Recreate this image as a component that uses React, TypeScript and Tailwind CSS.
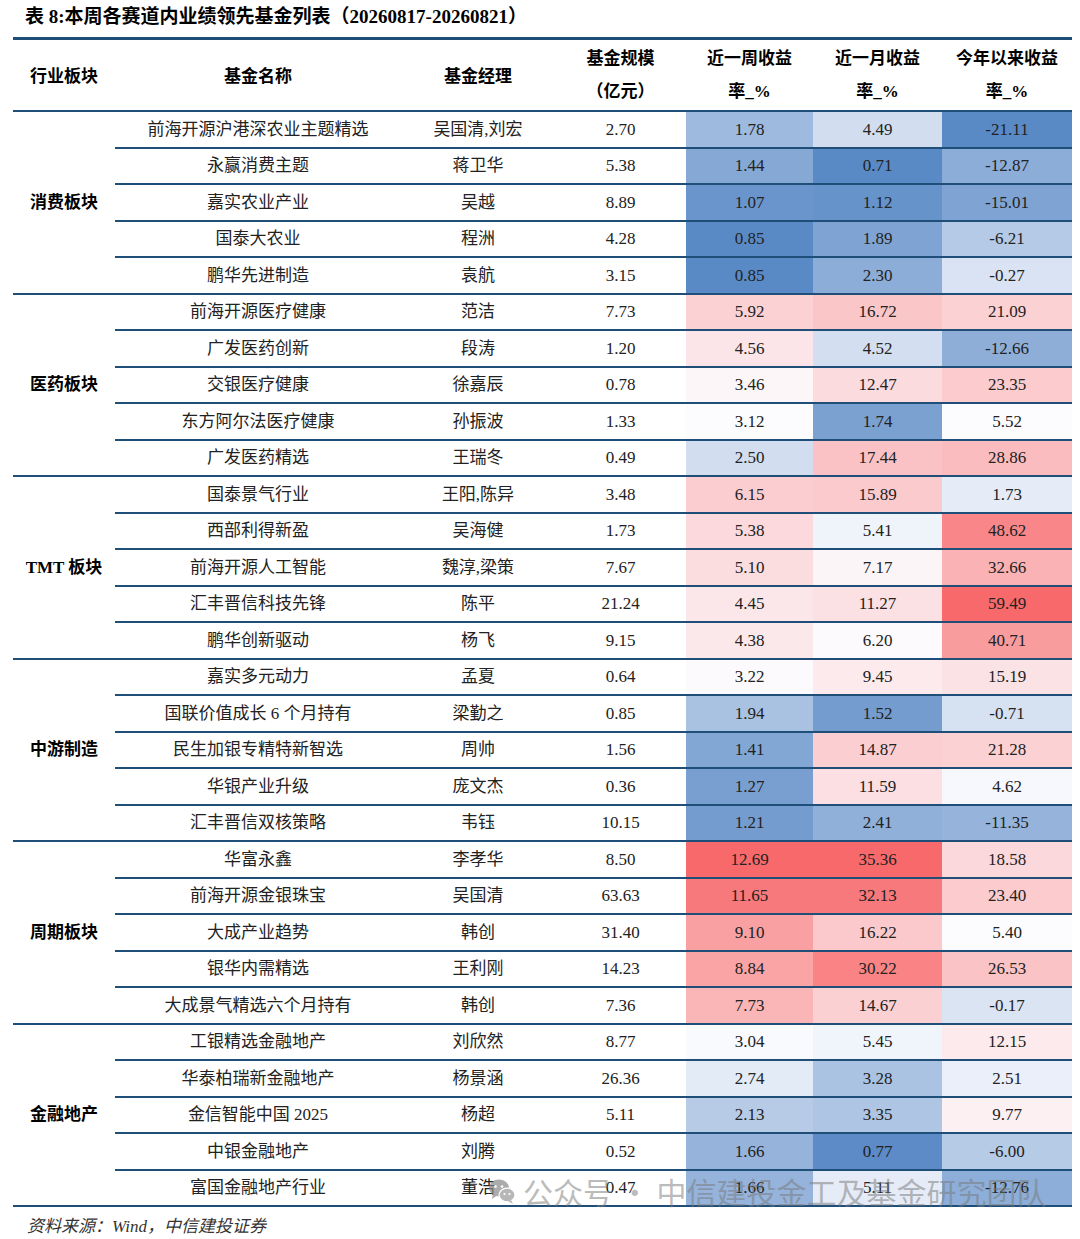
import React from "react";

type Row = [string, string, string, number, number, number];

const GROUPS: { sector: string; rows: Row[] }[] = [
  {
    sector: "消费板块",
    rows: [
      ["前海开源沪港深农业主题精选", "吴国清,刘宏", "2.70", 1.78, 4.49, -21.11],
      ["永赢消费主题", "蒋卫华", "5.38", 1.44, 0.71, -12.87],
      ["嘉实农业产业", "吴越", "8.89", 1.07, 1.12, -15.01],
      ["国泰大农业", "程洲", "4.28", 0.85, 1.89, -6.21],
      ["鹏华先进制造", "袁航", "3.15", 0.85, 2.3, -0.27],
    ],
  },
  {
    sector: "医药板块",
    rows: [
      ["前海开源医疗健康", "范洁", "7.73", 5.92, 16.72, 21.09],
      ["广发医药创新", "段涛", "1.20", 4.56, 4.52, -12.66],
      ["交银医疗健康", "徐嘉辰", "0.78", 3.46, 12.47, 23.35],
      ["东方阿尔法医疗健康", "孙振波", "1.33", 3.12, 1.74, 5.52],
      ["广发医药精选", "王瑞冬", "0.49", 2.5, 17.44, 28.86],
    ],
  },
  {
    sector: "TMT 板块",
    rows: [
      ["国泰景气行业", "王阳,陈异", "3.48", 6.15, 15.89, 1.73],
      ["西部利得新盈", "吴海健", "1.73", 5.38, 5.41, 48.62],
      ["前海开源人工智能", "魏淳,梁策", "7.67", 5.1, 7.17, 32.66],
      ["汇丰晋信科技先锋", "陈平", "21.24", 4.45, 11.27, 59.49],
      ["鹏华创新驱动", "杨飞", "9.15", 4.38, 6.2, 40.71],
    ],
  },
  {
    sector: "中游制造",
    rows: [
      ["嘉实多元动力", "孟夏", "0.64", 3.22, 9.45, 15.19],
      ["国联价值成长 6 个月持有", "梁勤之", "0.85", 1.94, 1.52, -0.71],
      ["民生加银专精特新智选", "周帅", "1.56", 1.41, 14.87, 21.28],
      ["华银产业升级", "庞文杰", "0.36", 1.27, 11.59, 4.62],
      ["汇丰晋信双核策略", "韦钰", "10.15", 1.21, 2.41, -11.35],
    ],
  },
  {
    sector: "周期板块",
    rows: [
      ["华富永鑫", "李孝华", "8.50", 12.69, 35.36, 18.58],
      ["前海开源金银珠宝", "吴国清", "63.63", 11.65, 32.13, 23.4],
      ["大成产业趋势", "韩创", "31.40", 9.1, 16.22, 5.4],
      ["银华内需精选", "王利刚", "14.23", 8.84, 30.22, 26.53],
      ["大成景气精选六个月持有", "韩创", "7.36", 7.73, 14.67, -0.17],
    ],
  },
  {
    sector: "金融地产",
    rows: [
      ["工银精选金融地产", "刘欣然", "8.77", 3.04, 5.45, 12.15],
      ["华泰柏瑞新金融地产", "杨景涵", "26.36", 2.74, 3.28, 2.51],
      ["金信智能中国 2025", "杨超", "5.11", 2.13, 3.35, 9.77],
      ["中银金融地产", "刘腾", "0.52", 1.66, 0.77, -6.0],
      ["富国金融地产行业", "董浩", "0.47", 1.66, 5.11, -12.76],
    ],
  },
];

// Excel 3-color scale: min blue, 50th percentile white, max red
const BLUE = [90, 138, 198];
const WHITE = [252, 252, 255];
const RED = [248, 105, 107];

function colStats(idx: 3 | 4 | 5) {
  const vals = GROUPS.flatMap((g) => g.rows.map((r) => r[idx] as number)).sort((a, b) => a - b);
  const n = vals.length;
  const pos = (n - 1) * 0.5;
  const lo = Math.floor(pos);
  const mid = vals[lo] + (vals[Math.ceil(pos)] - vals[lo]) * (pos - lo);
  return { min: vals[0], mid, max: vals[n - 1] };
}

const STATS = { 3: colStats(3), 4: colStats(4), 5: colStats(5) };

function mix(a: number[], b: number[], t: number) {
  const c = a.map((x, i) => Math.round(x + (b[i] - x) * t));
  return `rgb(${c[0]}, ${c[1]}, ${c[2]})`;
}

function heat(v: number, idx: 3 | 4 | 5) {
  const s = STATS[idx];
  if (v <= s.mid) return mix(BLUE, WHITE, (v - s.min) / (s.mid - s.min));
  return mix(WHITE, RED, (v - s.mid) / (s.max - s.mid));
}

const COLS = "grid grid-cols-[102px_286px_154px_131px_127px_129px_130px]";
const LINE = "border-[#1f4e79]";

export default function App() {
  return (
    <div
      className="relative w-[1080px] h-[1239px] bg-white pl-[13px] text-[#222]"
      style={{ fontFamily: '"Liberation Serif", "Noto Sans CJK SC", serif' }}
    >
      <div className="h-[37px] flex items-center pl-[12px] pb-[3px] text-[19px] font-bold text-black">
        表 8:本周各赛道内业绩领先基金列表（20260817-20260821）
      </div>

      <div className={`w-[1059px] border-t-[3px] ${LINE}`}>
        {/* header */}
        <div className={`${COLS} h-[72px] border-b-2 ${LINE} text-[17px] font-bold text-black`}>
          <div className="flex items-center justify-center pt-[4px]">行业板块</div>
          <div className="flex items-center justify-center pt-[4px]">基金名称</div>
          <div className="flex items-center justify-center pt-[4px]">基金经理</div>
          <HeadCell a="基金规模" b="（亿元）" />
          <HeadCell a="近一周收益" b="率_%" />
          <HeadCell a="近一月收益" b="率_%" />
          <HeadCell a="今年以来收益" b="率_%" />
        </div>

        {/* body */}
        <div className={`${COLS} auto-rows-[36.5px] text-[17px]`}>
          {GROUPS.map((g) => (
            <React.Fragment key={g.sector}>
              <div
                className={`row-span-5 flex items-center justify-center border-b-2 ${LINE} font-bold text-black`}
              >
                {g.sector}
              </div>
              {g.rows.map((r) => (
                <React.Fragment key={r[0]}>
                  <Cell>{r[0]}</Cell>
                  <Cell>{r[1]}</Cell>
                  <Cell>{r[2]}</Cell>
                  <Cell bg={heat(r[3], 3)}>{r[3].toFixed(2)}</Cell>
                  <Cell bg={heat(r[4], 4)}>{r[4].toFixed(2)}</Cell>
                  <Cell bg={heat(r[5], 5)}>{r[5].toFixed(2)}</Cell>
                </React.Fragment>
              ))}
            </React.Fragment>
          ))}
        </div>
      </div>

      <div className="pt-[7px] pl-[14px] text-[17px] italic text-[#333]">资料来源：Wind，中信建投证券</div>

      {/* watermark */}
      <div
        className="absolute left-[488px] top-[1176px] flex items-center gap-[7px] text-[30px] text-[rgba(120,120,120,0.5)] leading-none"
        style={{ fontFamily: '"Noto Sans CJK SC", sans-serif' }}
      >
        <WeChatMark />
        <span>公众号 · 中信建投金工及基金研究团队</span>
      </div>
    </div>
  );
}

function HeadCell({ a, b }: { a: string; b: string }) {
  return (
    <div className="flex flex-col items-center justify-center leading-[33px]">
      <span>{a}</span>
      <span>{b}</span>
    </div>
  );
}

function Cell({ children, bg }: { children: React.ReactNode; bg?: string }) {
  return (
    <div
      className={`flex items-center justify-center border-b-2 ${LINE} whitespace-nowrap`}
      style={bg ? { backgroundColor: bg } : undefined}
    >
      {children}
    </div>
  );
}

function WeChatMark() {
  return (
    <svg width="28" height="28" viewBox="0 0 28 28" className="opacity-70">
      <ellipse cx="11" cy="11" rx="10" ry="8.5" fill="#8a8a8a" />
      <path d="M5 17 L4 22 L9 18.5 Z" fill="#8a8a8a" />
      <circle cx="7.5" cy="9.5" r="1.3" fill="#fff" />
      <circle cx="14" cy="9.5" r="1.3" fill="#fff" />
      <ellipse cx="19" cy="18" rx="8" ry="6.8" fill="#9a9a9a" stroke="#fff" strokeWidth="1.2" />
      <path d="M23 23 L25 27 L20 24 Z" fill="#9a9a9a" />
      <circle cx="16.5" cy="17" r="1.1" fill="#fff" />
      <circle cx="21.5" cy="17" r="1.1" fill="#fff" />
    </svg>
  );
}
